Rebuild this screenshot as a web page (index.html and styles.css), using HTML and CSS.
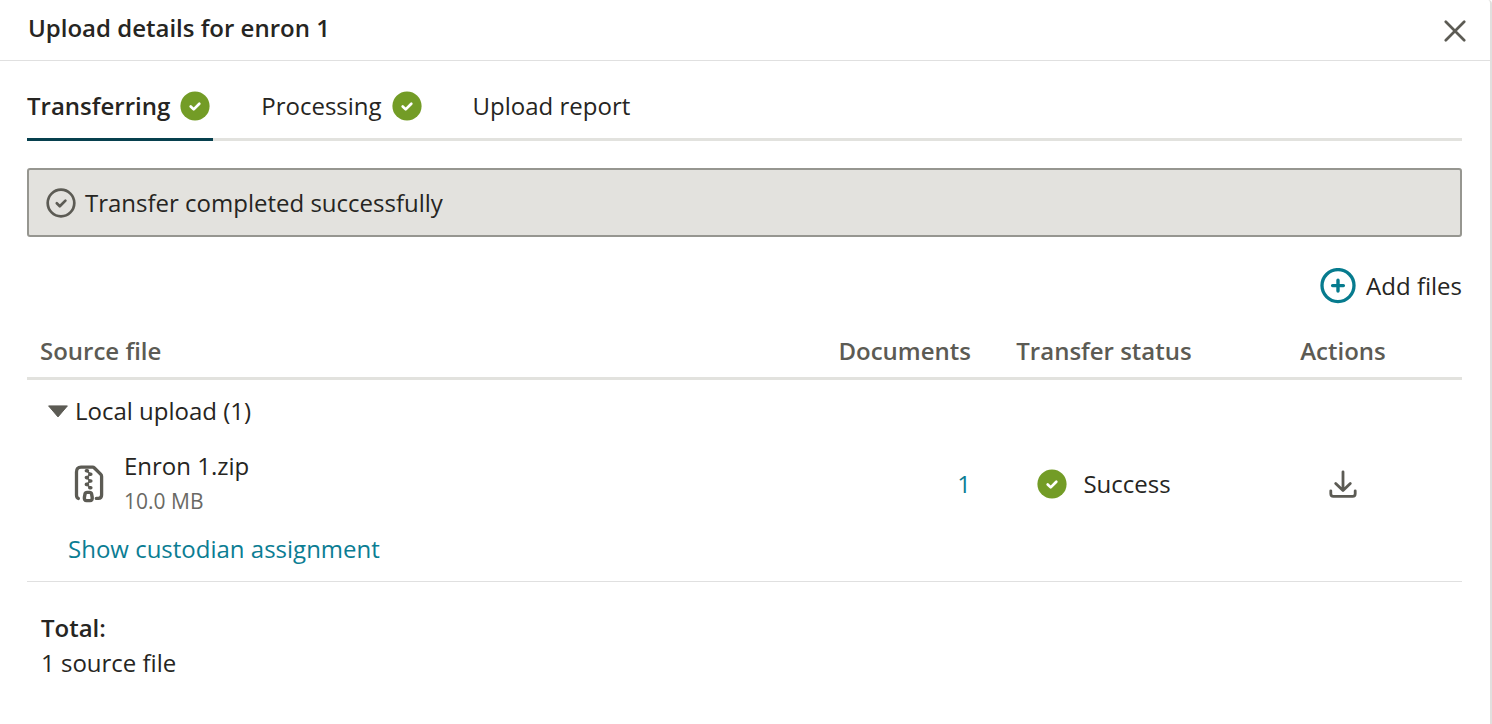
FILE: index.html
```html
<!DOCTYPE html>
<html lang="en">
<head>
<meta charset="utf-8">
<title>Upload details</title>
<link rel="stylesheet" href="styles.css">
</head>
<body>
<svg class="sprite" aria-hidden="true">
  <symbol id="badge-check" viewBox="0 0 30 30">
    <circle cx="15" cy="15" r="14.6" fill="#739c26"/>
    <path d="M10.7 15.5l3 2.9 5.6-5.6" fill="none" stroke="#fff" stroke-width="2.7" stroke-linecap="round" stroke-linejoin="round"/>
  </symbol>
</svg>
<section class="dialog" role="dialog" aria-labelledby="dialog-title">
  <header class="dialog-header">
    <h1 id="dialog-title" class="dialog-title">Upload details for enron 1</h1>
    <button class="icon-button" type="button" aria-label="Close">
      <svg width="22" height="22" viewBox="0 0 22 22"><path d="M1.8 1.8l18.4 18.4M20.2 1.8L1.8 20.2" fill="none" stroke="#5c5b54" stroke-width="2.7" stroke-linecap="round"/></svg>
    </button>
  </header>
  <div class="dialog-body">
    <div class="tabs" role="tablist">
      <button class="tab tab-active" type="button" role="tab" aria-selected="true">Transferring <svg class="badge"><use href="#badge-check"/></svg></button>
      <button class="tab" type="button" role="tab" aria-selected="false">Processing <svg class="badge"><use href="#badge-check"/></svg></button>
      <button class="tab" type="button" role="tab" aria-selected="false">Upload report</button>
    </div>
    <div class="banner" role="status">
      <svg class="badge" viewBox="0 0 30 30"><circle cx="15" cy="15" r="13.3" fill="none" stroke="#5c5b54" stroke-width="2.7"/><path d="M10.8 15.3l3 2.9 5.6-5.6" fill="none" stroke="#5c5b54" stroke-width="2.7" stroke-linecap="round" stroke-linejoin="round"/></svg>
      <span>Transfer completed successfully</span>
    </div>
    <div class="toolbar">
      <button class="add-button" type="button">
        <svg width="36" height="36" viewBox="0 0 36 36"><circle cx="18" cy="17.6" r="16" fill="none" stroke="#067b8e" stroke-width="3.3"/><path d="M18 12.2v10.8M12.6 17.6h10.8" fill="none" stroke="#067b8e" stroke-width="3.4" stroke-linecap="round"/></svg>
        Add files
      </button>
    </div>
    <table class="files">
      <thead>
        <tr>
          <th class="col-source" scope="col">Source file</th>
          <th class="col-documents" scope="col">Documents</th>
          <th class="col-status" scope="col">Transfer status</th>
          <th class="col-actions" scope="col">Actions</th>
        </tr>
      </thead>
      <tbody>
        <tr>
          <td class="group-cell" colspan="4">
            <button class="group-toggle" type="button" aria-expanded="true">
              <svg width="22" height="14" viewBox="0 0 22 14"><path d="M1.6 1.9h18.8L11 12.9z" fill="#5c5b54" stroke="#5c5b54" stroke-width="1" stroke-linejoin="round"/></svg>
              Local upload (1)
            </button>
          </td>
        </tr>
        <tr>
          <td class="file-cell">
            <div class="file">
              <svg width="30" height="38" viewBox="0 0 30 38" fill="none" stroke="#5c5b54" stroke-linecap="round" stroke-linejoin="round">
                <path d="M4.4 33.5C3 33 2.5 32 2.5 30V7Q2.5 2.2 7 2.2h11.6q1 0 1.8.8l6.2 6.2q1 1 1 2.3V30q0 3.4-3.3 3.4h-2" stroke-width="3.3"/>
                <path d="M12.4 5.8h1M15.8 9.2h1M12.4 12.6h1M15.8 16h1M12.4 19.4h1M15.8 22.8h1" stroke-width="3.6"/>
                <path d="M12.6 5.8l4 3.4-4 3.4 4 3.4-4 3.4 4 3.4" stroke-width="1.6"/>
                <path d="M13 27.4h2.6q1.6 0 2 1.6l.6 3.4q.4 3.2-2.2 3.2h-3.4q-2.6 0-2.2-3.2l.6-3.4q.4-1.6 2-1.6z" stroke-width="3.4"/>
              </svg>
              <div>
                <div class="file-name">Enron 1.zip</div>
                <div class="file-size">10.0 MB</div>
              </div>
            </div>
          </td>
          <td class="col-documents"><a class="link" href="#documents">1</a></td>
          <td class="col-status"><span class="status"><svg class="badge"><use href="#badge-check"/></svg>Success</span></td>
          <td class="col-actions">
            <button class="icon-button" type="button" aria-label="Download">
              <svg width="28" height="28" viewBox="0 0 28 28" fill="none" stroke="#5c5b54" stroke-width="2.8" stroke-linecap="round" stroke-linejoin="round"><path d="M14 1.8v18.4M6.7 13.4l7.3 7.2 7.3-7.2M1.8 20.8v3q0 2.6 2.6 2.6h19.2q2.6 0 2.6-2.6v-3"/></svg>
            </button>
          </td>
        </tr>
        <tr>
          <td class="assign-cell" colspan="4"><a class="link" href="#custodian">Show custodian assignment</a></td>
        </tr>
      </tbody>
    </table>
    <div class="total">
      <strong class="total-label">Total:</strong>
      <span>1 source file</span>
    </div>
  </div>
</section>
</body>
</html>
```

FILE: styles.css
```css
* {
  box-sizing: border-box;
}

body {
  margin: 0;
  background: #fff;
  color: #262522;
  font: 24px/32px "Open Sans", "Noto Sans", sans-serif;
}

button {
  margin: 0;
  padding: 0;
  border: 0;
  background: none;
  color: inherit;
  font: inherit;
  cursor: pointer;
}

svg {
  display: block;
  flex: none;
}

.sprite {
  display: none;
}

.dialog {
  min-height: 100vh;
  border-right: 2px solid #e0e0de;
  border-top-right-radius: 4px;
}

.dialog-header {
  display: flex;
  align-items: flex-start;
  justify-content: space-between;
  padding: 12px 24px 16px 28px;
  border-bottom: 1px solid #e0e0e0;
}

.dialog-title {
  margin: 0;
  font-size: 24px;
  font-weight: 600;
}

.dialog-header .icon-button {
  padding-top: 6px;
  height: 32px;
}

.dialog-body {
  padding: 29px 28px 0 27px;
}

.tabs {
  display: flex;
  gap: 48px;
  box-shadow: inset 0 -3px #e2e2de;
}

.tab {
  display: flex;
  align-items: center;
  gap: 10px;
  padding: 0 3px 16px 0;
  border-bottom: 3px solid transparent;
}

.tab-active {
  border-bottom-color: #07404e;
  font-weight: 600;
}

.badge {
  width: 30px;
  height: 30px;
}

.banner {
  display: flex;
  align-items: center;
  gap: 9px;
  margin-top: 27px;
  padding: 17px 17px 16px;
  border: 2px solid #969690;
  border-radius: 3px;
  background: #e3e2de;
}

.toolbar {
  display: flex;
  justify-content: flex-end;
  margin-top: 31px;
}

.add-button {
  display: flex;
  align-items: center;
  gap: 10px;
}

.files {
  width: 100%;
  margin-top: 23px;
  border-collapse: separate;
  border-spacing: 0;
  border-bottom: 1px solid #e0e0e0;
}

.files th {
  padding: 8px 13px 10px;
  border-bottom: 3px solid #e2e2de;
  color: #5c5b54;
  font-weight: 600;
}

.files td {
  padding: 0 13px;
}

.files .col-source {
  text-align: left;
}

.files .col-documents {
  text-align: right;
}

.files .col-status {
  width: 240px;
  text-align: center;
}

.files .col-actions {
  width: 238px;
  text-align: center;
}

.files .group-cell {
  padding: 15px 20px 22px;
}

.group-toggle {
  display: flex;
  align-items: center;
  gap: 6px;
}

.files .file-cell {
  padding-left: 47px;
}

.file {
  display: flex;
  align-items: center;
  gap: 20px;
}

.file-name {
  line-height: 34px;
}

.file-size {
  color: #6a6964;
  font-size: 21px;
  line-height: 36px;
}

.status {
  display: inline-flex;
  align-items: center;
  gap: 16px;
  vertical-align: top;
}

.col-actions .icon-button {
  display: block;
  margin: 0 auto;
}

.files .assign-cell {
  padding: 14px 41px 16px;
}

.link {
  color: #0b7d93;
  text-decoration: none;
}

.total {
  display: flex;
  flex-direction: column;
  gap: 3px;
  padding: 30px 14px;
}

.total-label {
  font-weight: 600;
}
```
